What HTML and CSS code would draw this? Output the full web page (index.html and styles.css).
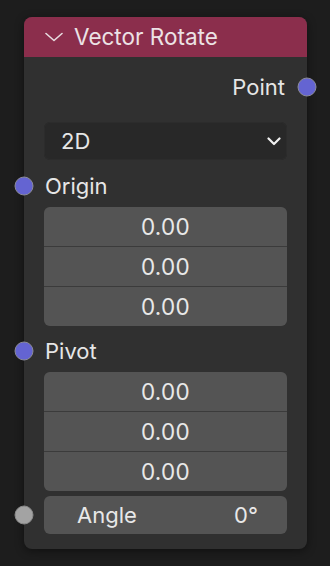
FILE: index.html
```html
<!DOCTYPE html>
<html>
<head>
<meta charset="utf-8">
<link rel="stylesheet" href="styles.css">
</head>
<body>
<div class="node">
  <div class="header">
    <svg class="collapse" width="18" height="10" viewBox="0 0 18 10"><path d="M1 1.5 L9 8.5 L17 1.5" fill="none" stroke="#e8dde0" stroke-width="1.6" stroke-linecap="round" stroke-linejoin="round"/></svg>
    <span class="title">Vector Rotate</span>
  </div>
  <div class="body">
    <div class="row out">
      <span class="label">Point</span>
      <span class="socket right vec"></span>
    </div>
    <div class="dropdown">
      <span>2D</span>
      <svg width="14" height="9" viewBox="0 0 14 9"><path d="M1.5 1.5 L7 7 L12.5 1.5" fill="none" stroke="#f0f0f0" stroke-width="2.2" stroke-linecap="round" stroke-linejoin="round"/></svg>
    </div>
    <div class="row in">
      <span class="socket left vec"></span>
      <span class="label">Origin</span>
    </div>
    <div class="vector">
      <div class="field">0.00</div>
      <div class="field">0.00</div>
      <div class="field">0.00</div>
    </div>
    <div class="row in">
      <span class="socket left vec"></span>
      <span class="label">Pivot</span>
    </div>
    <div class="vector">
      <div class="field">0.00</div>
      <div class="field">0.00</div>
      <div class="field">0.00</div>
    </div>
    <div class="slider">
      <span class="socket left gray"></span>
      <span>Angle</span>
      <span>0°</span>
    </div>
  </div>
</div>
</body>
</html>
```
FILE: styles.css
```css
html, body {
  margin: 0;
  padding: 0;
  background: #1d1d1d;
  width: 330px;
  height: 566px;
  overflow: hidden;
  font-family: Inter, "Noto Sans", sans-serif;
  color: #e6e6e6;
}
.node {
  margin: 17px 0 0 24px;
  width: 283px;
  background: #303030;
  border-radius: 8px;
  box-shadow: 0 2px 10px rgba(0,0,0,0.45);
  padding-bottom: 15px;
}
.header {
  height: 40px;
  background: #8b2e4c;
  border-radius: 8px 8px 0 0;
  display: flex;
  align-items: center;
  padding-left: 21px;
  gap: 11px;
}
.title {
  font-size: 22.5px;
  color: #ece2e5;
  line-height: 1;
}
.body {
  padding: 10px 20px 0 20px;
}
.row {
  position: relative;
  height: 40px;
  display: flex;
  align-items: center;
  font-size: 22px;
}
.row.out {
  justify-content: flex-end;
  padding-right: 2px;
}
.row.in {
  padding-left: 1px;
}
.socket {
  position: absolute;
  width: 17px;
  height: 17px;
  border-radius: 50%;
  border: 1.5px solid #8c8c9a;
  top: 50%;
  transform: translate(-50%, -50%);
}
.socket.vec { background: #6464d2; }
.socket.gray { background: #a3a3a3; border-color: #8a8a8a; }
.socket.right { left: calc(100% + 20px); }
.socket.left { left: -20px; }
.dropdown {
  margin-top: 15px;
  margin-bottom: 6px;
  height: 38px;
  background: #282828;
  border-radius: 6px;
  box-shadow: inset 0 0 0 1px #2c2c2c;
  display: flex;
  align-items: center;
  justify-content: space-between;
  padding: 0 6px 0 17px;
  font-size: 22px;
}
.vector {
  margin-top: 1px;
  border-radius: 6px;
  overflow: hidden;
  display: flex;
  flex-direction: column;
  gap: 1px;
  background: #3b3b3b;
  margin-bottom: 5px;
}
.field {
  height: 39px;
  background: #545454;
  display: flex;
  align-items: center;
  justify-content: center;
  font-size: 22.5px;
  letter-spacing: 0.3px;
  color: #e8e8e8;
}
.slider {
  position: relative;
  margin-top: 1px;
  height: 38px;
  background: #545454;
  border-radius: 6px;
  display: flex;
  align-items: center;
  justify-content: space-between;
  padding: 0 29px 0 33px;
  font-size: 22px;
  color: #e8e8e8;
}
```
